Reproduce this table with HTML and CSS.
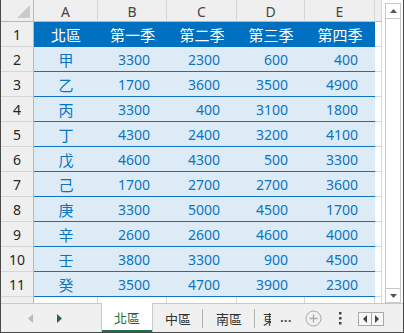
FILE: index.html
```html
<!DOCTYPE html>
<html>
<head>
<meta charset="utf-8">
<link rel="stylesheet" href="styles.css">
</head>
<body>
<div class="app">
  <div class="top">
    <div class="sheet">
      <div class="corner"><span class="tri"></span></div>
      <div class="ch">A</div><div class="ch">B</div><div class="ch">C</div><div class="ch">D</div><div class="ch">E</div><div class="ch fcol"></div>

      <div class="rh">1</div><div class="th">北區</div><div class="th">第一季</div><div class="th">第二季</div><div class="th">第三季</div><div class="th">第四季</div><div class="fc"></div>

      <div class="rh">2</div><div class="tn">甲</div><div class="td">3300</div><div class="td">2300</div><div class="td">600</div><div class="td">400</div><div class="fc"></div>
      <div class="rh">3</div><div class="tn">乙</div><div class="td">1700</div><div class="td">3600</div><div class="td">3500</div><div class="td">4900</div><div class="fc"></div>
      <div class="rh">4</div><div class="tn">丙</div><div class="td">3300</div><div class="td">400</div><div class="td">3100</div><div class="td">1800</div><div class="fc"></div>
      <div class="rh">5</div><div class="tn">丁</div><div class="td">4300</div><div class="td">2400</div><div class="td">3200</div><div class="td">4100</div><div class="fc"></div>
      <div class="rh">6</div><div class="tn">戊</div><div class="td">4600</div><div class="td">4300</div><div class="td">500</div><div class="td">3300</div><div class="fc"></div>
      <div class="rh">7</div><div class="tn">己</div><div class="td">1700</div><div class="td">2700</div><div class="td">2700</div><div class="td">3600</div><div class="fc"></div>
      <div class="rh">8</div><div class="tn">庚</div><div class="td">3300</div><div class="td">5000</div><div class="td">4500</div><div class="td">1700</div><div class="fc"></div>
      <div class="rh">9</div><div class="tn">辛</div><div class="td">2600</div><div class="td">2600</div><div class="td">4600</div><div class="td">4000</div><div class="fc"></div>
      <div class="rh">10</div><div class="tn">壬</div><div class="td">3800</div><div class="td">3300</div><div class="td">900</div><div class="td">4500</div><div class="fc"></div>
      <div class="rh">11</div><div class="tn">癸</div><div class="td">3500</div><div class="td">4700</div><div class="td">3900</div><div class="td">2300</div><div class="fc"></div>

      <div class="rh r12"></div><div class="c12"></div><div class="c12"></div><div class="c12"></div><div class="c12"></div><div class="c12"></div><div class="c12 fcol"></div>
    </div>
    <div class="vscroll">
      <div class="track">
        <div class="sbtn up"><svg width="7" height="4" viewBox="0 0 7 4"><polygon points="0,4 7,4 3.5,0" fill="#555"/></svg></div>
        <div class="trackbody"></div>
        <div class="sbtn down"><svg width="7" height="4" viewBox="0 0 7 4"><polygon points="0,0 7,0 3.5,4" fill="#555"/></svg></div>
      </div>
    </div>
  </div>
  <div class="tabbar">
    <div class="nav">
      <svg class="navl" width="5" height="9" viewBox="0 0 5 9"><polygon points="5,0 5,9 0,4.5" fill="#b9b9b9"/></svg>
      <svg class="navr" width="5" height="9" viewBox="0 0 5 9"><polygon points="0,0 0,9 5,4.5" fill="#1e6b3c"/></svg>
    </div>
    <div class="tab active">北區</div>
    <div class="tab sep">中區</div>
    <div class="tab sep wide">南區</div>
    <div class="tab partial"><span class="clip">東</span></div>
    <div class="dots">...</div>
    <div class="plus"><svg width="17" height="17" viewBox="0 0 17 17"><circle cx="8.5" cy="8.5" r="7.5" fill="none" stroke="#a8a8a8" stroke-width="1"/><path d="M8.5 4.5v8M4.5 8.5h8" stroke="#a8a8a8" stroke-width="1.3"/></svg></div>
    <div class="kebab"><svg width="3" height="13" viewBox="0 0 3 13"><rect x="0" y="0" width="2.5" height="2.5" fill="#444"/><rect x="0" y="5" width="2.5" height="2.5" fill="#444"/><rect x="0" y="10" width="2.5" height="2.5" fill="#444"/></svg></div>
    <div class="pager">
      <div class="pg"><svg width="4" height="8" viewBox="0 0 4 8"><polygon points="4,0 4,8 0,4" fill="#444"/></svg></div>
      <div class="pg last"><svg width="4" height="8" viewBox="0 0 4 8"><polygon points="0,0 0,8 4,4" fill="#444"/></svg></div>
    </div>
  </div>
</div>
</body>
</html>
```

FILE: styles.css
```css
* { box-sizing: border-box; }
html, body { margin: 0; padding: 0; background: #ffffff; }
body {
  font-family: "Noto Sans", "Noto Sans CJK TC", sans-serif;
  font-size: 14px;
}
.app {
  width: 404px;
  height: 333px;
  border-left: 1px solid #4a4a4a;
  border-right: 1px solid #4a4a4a;
  border-bottom: 1px solid #4a4a4a;
  display: flex;
  flex-direction: column;
  overflow: hidden;
  background: #ffffff;
}
.top {
  display: flex;
  height: 303px;
}
.sheet {
  display: grid;
  grid-template-columns: 33px 64px 69px 70px 68px 70px 7px;
  grid-template-rows: 22px repeat(11, 25px) 6px;
  width: 381px;
}
.sheet > div {
  display: flex;
  align-items: center;
  overflow: hidden;
  white-space: nowrap;
}
.corner {
  background: #efefef;
  border-right: 1px solid #b8b8b8;
  border-bottom: 1px solid #b8b8b8;
  position: relative;
}
.tri {
  position: absolute;
  right: 3px;
  bottom: 3px;
  width: 13px;
  height: 13px;
  background: #cacaca;
  clip-path: polygon(100% 0, 100% 100%, 0 100%);
}
.ch {
  background: #efefef;
  border-right: 1px solid #d6d6d6;
  border-bottom: 1px solid #b8b8b8;
  justify-content: center;
  color: #444;
  font-size: 14px;
  padding-top: 1px;
}
.ch.fcol { border-right: 1px solid #d6d6d6; }
.rh {
  background: #efefef;
  border-right: 1px solid #b8b8b8;
  border-bottom: 1px solid #d6d6d6;
  justify-content: center;
  color: #262626;
  font-size: 14px;
  padding-top: 1px;
}
.th {
  background: #0070c0;
  color: #ffffff;
  justify-content: center;
  font-family: "Noto Sans CJK TC", sans-serif;
  font-size: 15px;
  border-bottom: 1px solid #0070c0;
}
.tn {
  background: #ddebf7;
  color: #0a74c4;
  justify-content: center;
  font-family: "Noto Sans CJK TC", sans-serif;
  font-size: 15px;
  border-bottom: 1px solid #0f72c3;
}
.td {
  background: #ddebf7;
  color: #0a74c4;
  justify-content: flex-end;
  padding-right: 17px;
  font-size: 14px;
  border-bottom: 1px solid #0f72c3;
  padding-top: 1px;
}
.fc {
  border-right: 1px solid #d6d6d6;
  border-bottom: 1px solid #d6d6d6;
}
.r12 { border-bottom: none; }
.c12 {
  border-right: 1px solid #d6d6d6;
}
.vscroll {
  width: 21px;
  padding: 3px 2px 0 3px;
  background: #ffffff;
}
.track {
  height: 100%;
  border: 1px solid #c8c8c8;
  border-bottom: none;
  display: flex;
  flex-direction: column;
}
.sbtn {
  height: 15px;
  display: flex;
  align-items: center;
  justify-content: center;
}
.sbtn.up { border-bottom: 1px solid #c8c8c8; }
.sbtn.down { border-top: 1px solid #c8c8c8; border-bottom: 1px solid #c8c8c8; }
.trackbody { flex: 1; }

.tabbar {
  height: 29px;
  display: flex;
  align-items: stretch;
  background: #f0f0f0;
  border-top: 1px solid #c8c8c8;
  font-family: "Noto Sans CJK TC", sans-serif;
  font-size: 13px;
  color: #333;
}
.nav {
  width: 100px;
  display: flex;
  align-items: center;
  padding-left: 27px;
  gap: 24px;
}
.tab {
  display: flex;
  align-items: center;
  justify-content: center;
  width: 50px;
  position: relative;
}
.tab.active {
  width: 52px;
  margin-top: -1px;
  background: #ffffff;
  color: #1e6b3c;
  border-left: 1px solid #c8c8c8;
  border-right: 1px solid #c8c8c8;
}
.tab.active::after {
  content: "";
  position: absolute;
  left: 0;
  right: 0;
  bottom: 0;
  height: 2px;
  background: #1e7145;
}
.tab.sep::after {
  content: "";
  position: absolute;
  right: 0;
  top: 5px;
  bottom: 4px;
  width: 1px;
  background: #b4b4b4;
}
.tab.wide { width: 52px; }
.tab.partial {
  width: 16px;
  justify-content: flex-start;
  padding-left: 8px;
}
.clip {
  display: block;
  width: 8px;
  overflow: hidden;
  white-space: nowrap;
}
.dots {
  width: 30px;
  display: flex;
  align-items: center;
  justify-content: center;
  font-family: "Noto Sans", sans-serif;
  font-weight: bold;
  font-size: 12px;
  letter-spacing: 0.5px;
  color: #444;
  padding-bottom: 2px;
}
.plus {
  width: 24px;
  display: flex;
  align-items: center;
  justify-content: center;
}
.kebab {
  width: 30px;
  display: flex;
  align-items: center;
  justify-content: center;
}
.pager {
  margin-left: 3px;
  margin-top: 8px;
  margin-bottom: 6px;
  width: 26px;
  display: flex;
  border: 1px solid #a8a8a8;
  background: #f7f7f7;
}
.pg {
  flex: 1;
  display: flex;
  align-items: center;
  justify-content: center;
  border-right: 1px solid #a8a8a8;
}
.pg.last { border-right: none; }
```
